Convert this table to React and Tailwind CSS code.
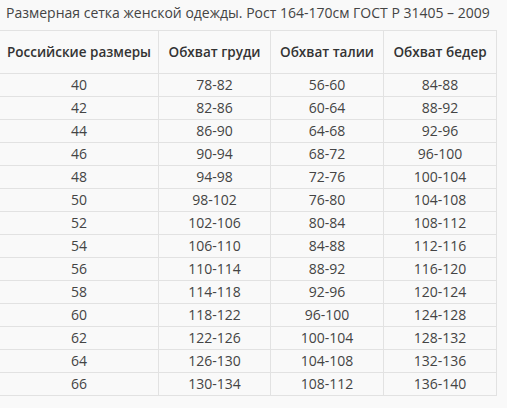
import React from 'react';

const rows = [
  ['40', '78-82', '56-60', '84-88'],
  ['42', '82-86', '60-64', '88-92'],
  ['44', '86-90', '64-68', '92-96'],
  ['46', '90-94', '68-72', '96-100'],
  ['48', '94-98', '72-76', '100-104'],
  ['50', '98-102', '76-80', '104-108'],
  ['52', '102-106', '80-84', '108-112'],
  ['54', '106-110', '84-88', '112-116'],
  ['56', '110-114', '88-92', '116-120'],
  ['58', '114-118', '92-96', '120-124'],
  ['60', '118-122', '96-100', '124-128'],
  ['62', '122-126', '100-104', '128-132'],
  ['64', '126-130', '104-108', '132-136'],
  ['66', '130-134', '108-112', '136-140'],
];

const headers = ['Российские размеры', 'Обхват груди', 'Обхват талии', 'Обхват бедер'];
const widths = ['w-[159px]', 'w-[112px]', 'w-[113px]', 'w-[113px]'];

export default function App() {
  return (
    <div className="min-h-screen w-[507px] h-[408px] bg-[#f9f9f9] font-['Open_Sans',sans-serif] overflow-hidden">
      {/* Caption */}
      <p className="h-[30px] pl-[6px] pt-[3px] text-[14px] leading-[20px] text-[#444]">
        Размерная сетка женской одежды. Рост 164-170см ГОСТ Р 31405 – 2009
      </p>

      {/* Size table */}
      <table className="border-collapse w-[498px] -ml-px table-fixed">
        <thead>
          <tr className="h-[43px]">
            {headers.map((h, i) => (
              <th
                key={h}
                className={`${widths[i]} border border-[#e2e2e2] px-0 text-center text-[13.5px] font-semibold text-[#333]`}
              >
                {h}
              </th>
            ))}
          </tr>
        </thead>
        <tbody>
          {rows.map((r) => (
            <tr key={r[0]} className="h-[23px]">
              {r.map((c, i) => (
                <td
                  key={i}
                  className="border border-[#e2e2e2] p-0 text-center text-[14px] leading-[22px] text-[#444]"
                >
                  {c}
                </td>
              ))}
            </tr>
          ))}
        </tbody>
      </table>
    </div>
  );
}
